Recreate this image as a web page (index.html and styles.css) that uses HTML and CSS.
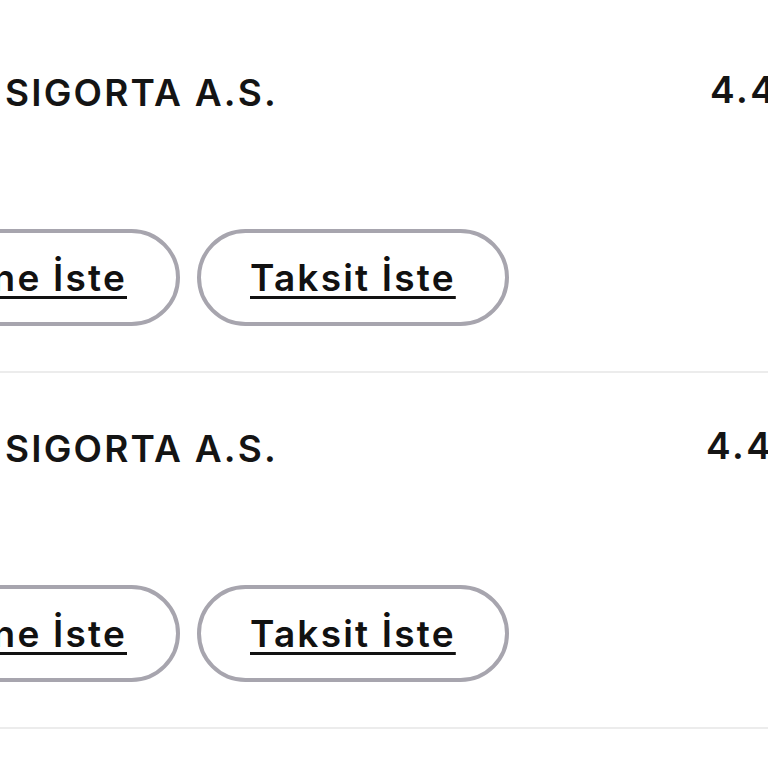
FILE: index.html
```html
<!DOCTYPE html>
<html lang="tr">
<head>
<meta charset="utf-8">
<title>Teklifler</title>
<link rel="stylesheet" href="styles.css">
</head>
<body>
<div class="list">
  <div class="item">
    <div class="head">
      <div class="name">SIGORTA A.S.</div>
      <div class="score">4.4</div>
    </div>
    <div class="actions">
      <a class="btn btn-cut" href="#">ne İste</a>
      <a class="btn" href="#">Taksit İste</a>
    </div>
  </div>
  <div class="item">
    <div class="head">
      <div class="name">SIGORTA A.S.</div>
      <div class="score score-alt">4.4</div>
    </div>
    <div class="actions">
      <a class="btn btn-cut" href="#">ne İste</a>
      <a class="btn" href="#">Taksit İste</a>
    </div>
  </div>
</div>
</body>
</html>
```

FILE: styles.css
```css
html, body {
  margin: 0;
  padding: 0;
  background: #ffffff;
  overflow: hidden;
}
body {
  font-family: Inter, "Noto Sans", sans-serif;
  color: #141414;
  width: 768px;
  height: 768px;
}
.list {
  padding-top: 17px;
}
.item {
  padding-top: 54px;
  padding-bottom: 45px;
  border-bottom: 2px solid #ececec;
}
.head {
  display: grid;
  grid-template-columns: 710px 1fr;
  align-items: start;
  height: 44px;
}
.name {
  padding-left: 5px;
  font-size: 37px;
  line-height: 44px;
  font-weight: 600;
  letter-spacing: 2.2px;
  white-space: nowrap;
}
.score {
  font-size: 37px;
  line-height: 38px;
  font-weight: 600;
  letter-spacing: 2.5px;
  white-space: nowrap;
}
.score-alt {
  margin-left: -4px;
}
.actions {
  display: flex;
  gap: 17px;
  margin-top: 114px;
}
.btn {
  box-sizing: border-box;
  height: 97px;
  display: inline-flex;
  align-items: center;
  padding: 0 49px;
  border: 4px solid #a7a5ae;
  border-radius: 49px;
  color: #111111;
  font-size: 37px;
  font-weight: 600;
  letter-spacing: 2.2px;
  white-space: nowrap;
  text-decoration: underline;
  text-decoration-thickness: 3px;
  text-underline-offset: 5px;
}
.btn-cut {
  width: 250px;
  margin-left: -70px;
  justify-content: flex-end;
}
```
